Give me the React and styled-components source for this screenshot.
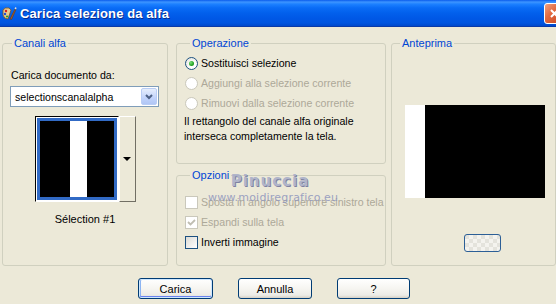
import React from 'react'
import styled, { createGlobalStyle } from 'styled-components'

const GlobalStyle = createGlobalStyle`
	html, body {
		margin: 0;
		padding: 0;
		background: #ECE9D8;
	}
	body {
		font-family: "Liberation Sans", Arial, sans-serif;
		font-size: 10.6px;
		color: #000;
	}
`

const Window = styled.div`
	width: 556px;
	height: 304px;
	overflow: hidden;
	background: #ECE9D8;
	position: relative;
`

const TitleBar = styled.div`
	height: 26px;
	border-bottom: 1px solid #0A3AA8;
	background: linear-gradient(#0A5CEC 0%, #3D95FF 8%, #1C80FF 16%, #0A6CF6 30%, #0260EC 50%, #0058E6 70%, #0055E0 88%, #0049CC 100%);
	display: flex;
	align-items: center;
	padding-left: 2px;
	gap: 3px;
`

const TitleText = styled.span`
	color: #fff;
	font-weight: bold;
	font-size: 13px;
	letter-spacing: 0.1px;
	text-shadow: 1px 1px 0 #0A2C8C;
	flex: 1;
`

const CloseButton = styled.div`
	width: 21px;
	height: 21px;
	margin-right: -9px;
	box-sizing: border-box;
	border: 1px solid #fff;
	border-radius: 3px;
	background: linear-gradient(135deg, #F0A080 0%, #E26A40 40%, #C8431C 100%);
	display: flex;
	align-items: center;
	justify-content: center;
`

const Content = styled.div`
	display: flex;
	padding: 16px 0 0 2px;
	height: 223px;
`

const Column = styled.div`
	display: flex;
	flex-direction: column;
	width: ${p => p.width}px;
	margin-left: ${p => p.gap || 0}px;
	gap: 11px;
`

const Group = styled.div`
	box-sizing: border-box;
	width: ${p => p.width ? p.width + 'px' : 'auto'};
	height: ${p => p.height}px;
	border: 1px solid #D0D0BF;
	border-radius: 3px;
	padding: 0 ${p => p.padRight || 0}px 0 ${p => p.padLeft || 0}px;
	display: flex;
	flex-direction: column;
`

const GroupTitle = styled.div`
	align-self: flex-start;
	margin: -7px 0 0 ${p => p.offset || 6}px;
	padding: 0 2px;
	line-height: 13px;
	font-size: 11px;
	color: #0046D5;
	background: #ECE9D8;
`

const Label = styled.div`
	line-height: 13px;
	margin-top: ${p => p.top || 0}px;
	padding-left: 1px;
`

const Combo = styled.div`
	margin-top: 4px;
	width: 149px;
	height: 21px;
	box-sizing: border-box;
	border: 1px solid #7F9DB9;
	background: #fff;
	display: flex;
	align-items: center;
	padding: 1px;
`

const ComboText = styled.span`
	flex: 1;
	padding-left: 3px;
`

const ComboButton = styled.div`
	width: 16px;
	height: 17px;
	box-sizing: border-box;
	border: 1px solid #B9CDF5;
	border-radius: 2px;
	background: linear-gradient(#E6EEFC, #C1D3FB 60%, #B0C6F5);
	display: flex;
	align-items: center;
	justify-content: center;
`

const ThumbPicker = styled.div`
	margin: 9px auto 0;
	display: flex;
	height: 86px;
`

const ThumbFrame = styled.div`
	box-sizing: border-box;
	border: 1px solid;
	border-color: #000 #fff #fff #000;
	padding: 1px;
	background: #fff;
	display: flex;
`

const ThumbImage = styled.div`
	width: 74px;
	border: 3px solid #316AC5;
	background: linear-gradient(90deg, #000 0, #000 30px, #fff 30px, #fff 47px, #000 47px);
`

const ThumbDrop = styled.div`
	width: 17px;
	box-sizing: border-box;
	border: 1px solid;
	border-color: #fff #716F64 #716F64 #fff;
	background: #ECE9D8;
	display: flex;
	align-items: center;
	justify-content: center;
`

const DownTriangle = styled.span`
	width: 0;
	height: 0;
	border-left: 4px solid transparent;
	border-right: 4px solid transparent;
	border-top: 4px solid #000;
`

const Caption = styled.div`
	margin-top: 11px;
	line-height: 13px;
	font-size: 11px;
	text-align: center;
`

const OptionList = styled.div`
	margin-top: ${p => p.top}px;
	display: flex;
	flex-direction: column;
`

const OptionRow = styled.div`
	height: 20px;
	display: flex;
	align-items: center;
	gap: 3px;
	padding-left: 1px;
	white-space: nowrap;
	color: ${p => p.disabled ? '#ACA899' : '#000'};
`

const Radio = styled.span`
	flex: none;
	width: 13px;
	height: 13px;
	box-sizing: border-box;
	border-radius: 50%;
	border: 1px solid ${p => p.disabled ? '#CAC8BB' : '#1C5180'};
	background: ${p => p.disabled ? '#fff' : 'radial-gradient(circle at 65% 70%, #fff 0, #fff 30%, #E0DFD6 100%)'};
	display: flex;
	align-items: center;
	justify-content: center;
	&::after {
		content: '';
		display: ${p => p.checked ? 'block' : 'none'};
		width: 5px;
		height: 5px;
		border-radius: 50%;
		background: radial-gradient(circle at 35% 35%, #7BE07B, #21A121 60%, #1A8A1A);
	}
`

const Checkbox = styled.span`
	flex: none;
	width: 13px;
	height: 13px;
	box-sizing: border-box;
	border: 1px solid ${p => p.disabled ? '#CAC8BB' : '#1C5180'};
	background: ${p => p.disabled ? '#fff' : 'linear-gradient(135deg, #DCDBD5, #fff)'};
	display: flex;
	align-items: center;
	justify-content: center;
`

const Note = styled.div`
	margin-top: 1px;
	line-height: 15px;
`

const Preview = styled.div`
	margin: 55px 0 0 13px;
	width: 140px;
	height: 93px;
	background: linear-gradient(90deg, #fff 0, #fff 20px, #000 20px);
`

const SmallButton = styled.div`
	margin: 36px 0 0 72px;
	width: 37px;
	height: 18px;
	box-sizing: border-box;
	border: 1px solid #2C5F96;
	border-radius: 3px;
	background:
		repeating-conic-gradient(#F4F3EE 0 25%, #E4E3DC 0 50%) 0 0 / 8px 8px;
`

const ButtonRow = styled.div`
	display: flex;
	gap: 25px;
	padding: 12px 0 0 138px;
`

const Button = styled.button`
	width: ${p => p.width || 75}px;
	height: 21px;
	box-sizing: border-box;
	border: 1px solid #003C74;
	border-radius: 3px;
	padding: 0;
	font-family: "Liberation Sans", Arial, sans-serif;
	font-size: 11px;
	color: #000;
	background: linear-gradient(#FFFFFF 0%, #F6F5F1 50%, #ECEBE6 85%, #D6D0C5 100%);
	box-shadow: ${p => p.primary
		? 'inset 0 0 0 1px #CEE7FF, inset 0 -1px 0 1px #6982EE, inset 1px 0 0 1px #8CB4F2'
		: 'none'};
`

const Watermark = styled.div`
	position: absolute;
	left: 208px;
	top: 173px;
	width: 124px;
	text-align: center;
	pointer-events: none;
	color: #8F96BD;
	opacity: 0.85;
`

const WatermarkName = styled.div`
	font-family: "DejaVu Sans", sans-serif;
	font-size: 15px;
	font-weight: bold;
	letter-spacing: 1px;
	line-height: 17px;
	color: #A6ACC8;
	text-shadow: 1px 1px 0 #6B7199;
`

const WatermarkUrl = styled.div`
	font-family: "DejaVu Sans", sans-serif;
	font-size: 11px;
	line-height: 12px;
	margin-top: 2px;
	letter-spacing: 0.2px;
`

const AppIcon = () => (
	<svg width="15" height="15" viewBox="0 0 15 15">
		<path d="M1 4 Q3 1 7 2 L9 4 L6 13 Q2 13 1 9 Z" fill="#E8C890" stroke="#7A5420" strokeWidth="0.8" />
		<circle cx="4" cy="5" r="1.2" fill="#D02020" />
		<circle cx="3" cy="8" r="1.2" fill="#2050D0" />
		<circle cx="5" cy="10.5" r="1.1" fill="#20A030" />
		<path d="M8 13 L13 3 L14 3.6 L9.5 13.5 Z" fill="#B06020" stroke="#5A3010" strokeWidth="0.5" />
		<path d="M12.5 2.5 L13.5 1 L14.6 2 L14 3.4 Z" fill="#E0E0E0" />
	</svg>
)

const CheckMark = ({ color }) => (
	<svg width="9" height="9" viewBox="0 0 9 9">
		<path d="M1 4 L3.5 6.5 L8 2" fill="none" stroke={color} strokeWidth="1.8" />
	</svg>
)

const App = () => (
	<Window>
		<GlobalStyle />
		<TitleBar>
			<AppIcon />
			<TitleText>Carica selezione da alfa</TitleText>
			<CloseButton>
				<svg width="11" height="11" viewBox="0 0 11 11">
					<path d="M2 2 L9 9 M9 2 L2 9" stroke="#fff" strokeWidth="2" />
				</svg>
			</CloseButton>
		</TitleBar>

		<Content>
			<Group width={166} height={223} padLeft={7} padRight={7}>
				<GroupTitle offset={2}>Canali alfa</GroupTitle>
				<Label top={19}>Carica documento da:</Label>
				<Combo>
					<ComboText>selectionscanalalpha</ComboText>
					<ComboButton>
						<svg width="8" height="6" viewBox="0 0 8 6">
							<path d="M1 1 L4 4 L7 1" fill="none" stroke="#4D6185" strokeWidth="2" />
						</svg>
					</ComboButton>
				</Combo>
				<ThumbPicker>
					<ThumbFrame>
						<ThumbImage />
					</ThumbFrame>
					<ThumbDrop>
						<DownTriangle />
					</ThumbDrop>
				</ThumbPicker>
				<Caption>Sélection #1</Caption>
			</Group>

			<Column width={210} gap={8}>
				<Group height={121} padLeft={7}>
					<GroupTitle offset={0}>Operazione</GroupTitle>
					<OptionList top={3}>
						<OptionRow>
							<Radio checked />
							<span>Sostituisci selezione</span>
						</OptionRow>
						<OptionRow disabled>
							<Radio disabled />
							<span>Aggiungi alla selezione corrente</span>
						</OptionRow>
						<OptionRow disabled>
							<Radio disabled />
							<span>Rimuovi dalla selezione corrente</span>
						</OptionRow>
					</OptionList>
					<Note>
						Il rettangolo del canale alfa originale<br />
						interseca completamente la tela.
					</Note>
				</Group>
				<Group height={91} padLeft={7}>
					<GroupTitle offset={0}>Opzioni</GroupTitle>
					<OptionList top={10}>
						<OptionRow disabled>
							<Checkbox disabled />
							<span>Sposta in angolo superiore sinistro tela</span>
						</OptionRow>
						<OptionRow disabled>
							<Checkbox disabled>
								<CheckMark color="#C0BEB2" />
							</Checkbox>
							<span>Espandi sulla tela</span>
						</OptionRow>
						<OptionRow>
							<Checkbox />
							<span>Inverti immagine</span>
						</OptionRow>
					</OptionList>
				</Group>
			</Column>

			<Column width={165} gap={5}>
				<Group height={223}>
					<GroupTitle offset={8}>Anteprima</GroupTitle>
					<Preview />
					<SmallButton />
				</Group>
			</Column>
		</Content>

		<ButtonRow>
			<Button primary>Carica</Button>
			<Button width={74}>Annulla</Button>
			<Button width={73}>?</Button>
		</ButtonRow>

		<Watermark>
			<WatermarkName>Pinuccia</WatermarkName>
			<WatermarkUrl>www.moidiregrafico.eu</WatermarkUrl>
		</Watermark>
	</Window>
)

export default App
